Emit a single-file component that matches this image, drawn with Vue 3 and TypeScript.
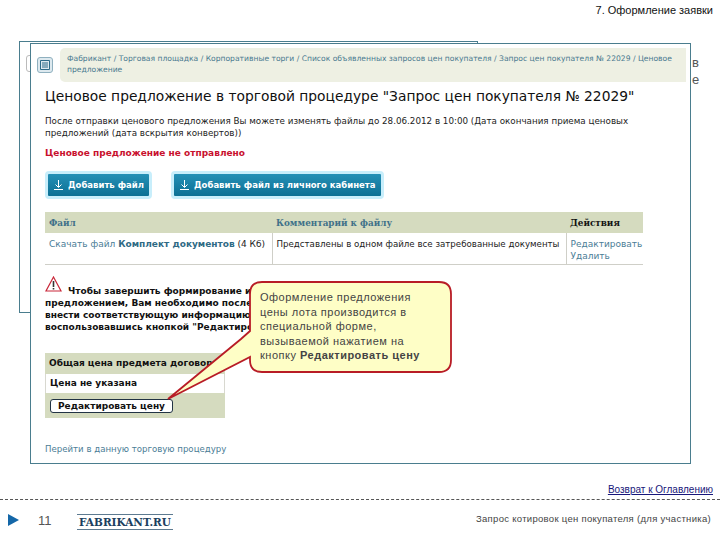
<script setup lang="ts">
interface FileRow {
  name: string
  size: string
  comment: string
}

const crumbs = [
  'Фабрикант',
  'Торговая площадка',
  'Корпоративные торги',
  'Список объявленных запросов цен покупателя',
  'Запрос цен покупателя № 22029',
  'Ценовое предложение'
]

const files: FileRow[] = [
  {
    name: 'Комплект документов',
    size: '(4 Кб)',
    comment: 'Представлены в одном файле все затребованные документы'
  }
]
</script>

<template>
  <div class="page">
    <header class="top">7. Оформление заявки</header>

    <main class="stage">
      <div class="behind-text">в<br />е</div>

      <section class="window back">
        <span class="back-tab"></span>
      </section>

      <section class="window front">
        <div class="crumb-row">
          <span class="menu-icon">
            <svg width="10" height="10" viewBox="0 0 10 10">
              <path d="M.5.5h9v9h-9zM2 3h6M2 5h6M2 7h6" fill="none" stroke="#2d6a88" />
            </svg>
          </span>
          <nav class="crumbs">{{ crumbs.join(' / ') }}</nav>
        </div>

        <div class="content">
          <h1>Ценовое предложение в торговой процедуре "Запрос цен покупателя № 22029"</h1>
          <p class="note">
            После отправки ценового предложения Вы можете изменять файлы до 28.06.2012 в 10:00 (Дата окончания приема ценовых<br />
            предложений (дата вскрытия конвертов))
          </p>
          <p class="status">Ценовое предложение не отправлено</p>

          <div class="actions">
            <button class="add-btn">
              <svg width="9" height="10" viewBox="0 0 9 10"><path d="M4.5 0v7M1.5 4.5l3 3 3-3M0 9.5h9" fill="none" stroke="#fff" /></svg>
              Добавить файл
            </button>
            <button class="add-btn">
              <svg width="9" height="10" viewBox="0 0 9 10"><path d="M4.5 0v7M1.5 4.5l3 3 3-3M0 9.5h9" fill="none" stroke="#fff" /></svg>
              Добавить файл из личного кабинета
            </button>
          </div>

          <table class="files">
            <thead>
              <tr>
                <th class="c1">Файл</th>
                <th class="c2">Комментарий к файлу</th>
                <th class="c3">Действия</th>
              </tr>
            </thead>
            <tbody>
              <tr v-for="file in files" :key="file.name">
                <td><a>Скачать файл <b>{{ file.name }}</b></a> {{ file.size }}</td>
                <td class="comment">{{ file.comment }}</td>
                <td><a>Редактировать</a><br /><a>Удалить</a></td>
              </tr>
            </tbody>
          </table>

          <div class="warning">
            <svg class="warn-icon" width="17" height="16" viewBox="0 0 17 16">
              <path d="M8.5 1L16 15H1z" fill="#fff" stroke="#c9283a" stroke-width="1.2" />
              <path d="M8.5 5v6M8.5 12v1.6" stroke="#333" stroke-width="1.6" />
            </svg>
            <b>Чтобы завершить формирование и подачу заявки<br />
            предложением, Вам необходимо после<br />
            внести соответствующую информацию<br />
            воспользовавшись кнопкой "Редактировать цену"</b>
          </div>

          <div class="price">
            <div class="price-head">Общая цена предмета договора</div>
            <div class="price-value">Цена не указана</div>
            <div class="price-foot"><button class="edit-btn">Редактировать цену</button></div>
          </div>

          <a class="go-link">Перейти в данную торговую процедуру</a>
        </div>
      </section>

      <aside class="callout">
        <svg class="callout-shape" width="202" height="91" viewBox="0 0 202 91">
          <path
            d="M13 1H190Q202 1 202 13V79Q202 91 190 91H13Q1 91 1 79V76L-81 118L-8 58L1 50V13Q1 1 13 1Z"
            fill="#fefec6"
            stroke="#b81c26"
            stroke-width="1.8"
          />
        </svg>
        <p>Оформление предложения цены лота производится в специальной форме, вызываемой нажатием на кнопку <b>Редактировать цену</b></p>
      </aside>
    </main>

    <div class="return"><a>Возврат к Оглавлению</a></div>

    <footer class="bottom">
      <span class="play"></span>
      <span class="num">11</span>
      <span class="logo">FABRIKANT.RU</span>
      <span class="doc">Запрос котировок цен покупателя (для участника)</span>
    </footer>
  </div>
</template>

<style>
html,
body {
  margin: 0;
  background: #fff;
}
</style>

<style scoped>
.page {
  width: 720px;
  height: 540px;
  overflow: hidden;
  display: flex;
  flex-direction: column;
  font-family: "Liberation Sans", Arial, sans-serif;
}

.top {
  height: 41px;
  box-sizing: border-box;
  padding: 3px 7px 0 0;
  text-align: right;
  font-size: 11px;
  line-height: 14px;
  color: #111;
}

.stage {
  position: relative;
  height: 440px;
}

.behind-text {
  position: absolute;
  left: 692px;
  top: 13px;
  font-size: 13px;
  line-height: 17px;
  color: #555;
}

.window {
  position: absolute;
  box-sizing: border-box;
  background: #fff;
  border: 1px solid #4a7d8e;
}

.back {
  left: 19px;
  top: 0;
  width: 459px;
  height: 272px;
}

.back-tab {
  display: block;
  width: 12px;
  height: 15px;
  margin: 13px 0 0 6px;
  border: 1px solid #bbb;
  border-radius: 3px 0 0 3px;
}

.front {
  left: 30px;
  top: 2px;
  width: 661px;
  height: 421px;
  padding: 4px 4px 0 6px;
}

.crumb-row {
  display: flex;
  align-items: center;
  gap: 7px;
}

.menu-icon {
  width: 16px;
  height: 16px;
  flex: none;
  display: flex;
  align-items: center;
  justify-content: center;
  box-sizing: border-box;
  background: #dde9ef;
  border: 1px solid #8fb0bf;
  border-radius: 3px;
}

.crumbs {
  flex: 1;
  box-sizing: border-box;
  height: 34px;
  padding: 6px 8px 0 7px;
  background: #eef0e3;
  border-radius: 5px 0 0 5px;
  font: 7.6px/10.5px "DejaVu Sans", sans-serif;
  color: #4a7a90;
}

.content {
  padding: 0 0 0 8px;
  font-family: "DejaVu Sans", sans-serif;
}

h1 {
  margin: 4px 0 0;
  font-size: 13.8px;
  font-weight: 400;
  line-height: 20px;
  color: #111;
  white-space: nowrap;
}

.note {
  margin: 9px 0 0;
  font-size: 8.76px;
  line-height: 12px;
  color: #222;
  white-space: nowrap;
}

.status {
  margin: 8px 0 0;
  font-size: 9px;
  font-weight: 700;
  line-height: 12px;
  color: #c8102e;
}

.actions {
  display: flex;
  gap: 19px;
  margin-top: 12px;
}

.add-btn {
  height: 28px;
  padding: 0 5px 0 6px;
  display: flex;
  align-items: center;
  gap: 5px;
  background: linear-gradient(#2590b6, #0c7094);
  border: 3px solid #c8eefb;
  border-radius: 4px;
  color: #fff;
  font: 700 8.5px "DejaVu Sans", sans-serif;
}

.files {
  width: 598px;
  margin-top: 13px;
  table-layout: fixed;
  border-collapse: collapse;
  font-size: 9px;
  color: #222;
}

.files th {
  height: 21px;
  padding: 0 4px;
  box-sizing: border-box;
  text-align: left;
  background: #d5dbbf;
  color: #3f7189;
  font-family: "DejaVu Serif", serif;
  font-size: 8.8px;
}

.files th.c1 {
  width: 227px;
}

.files th.c2 {
  width: 294px;
}

.files th.c3 {
  color: #111;
}

.files td {
  height: 31px;
  padding: 5px 4px 0;
  box-sizing: border-box;
  vertical-align: top;
  line-height: 12px;
  white-space: nowrap;
  overflow: hidden;
  border-bottom: 1px solid #cfcfc8;
  border-right: 1px solid #cfcfc8;
}

.files td.comment {
  font-size: 8.66px;
}

.files td:last-child {
  border-right: 0;
}

.files a,
.go-link {
  color: #4a7d96;
}

.files b {
  color: #2f6a85;
}

.warning {
  position: relative;
  box-sizing: border-box;
  height: 67px;
  margin-top: 11px;
  padding-top: 9px;
  font-size: 9px;
  line-height: 12.2px;
  color: #111;
  white-space: nowrap;
}

.warning b {
  display: block;
  text-indent: 23px;
}

.warn-icon {
  position: absolute;
  left: 0;
  top: 0;
}

.price {
  width: 180px;
  margin-top: 10px;
  background: #d5dbbf;
  font-size: 9px;
  color: #111;
  font-weight: 700;
  white-space: nowrap;
}

.price-head {
  height: 21px;
  padding: 0 4px;
  line-height: 21px;
  overflow: hidden;
}

.price-value {
  height: 19px;
  box-sizing: border-box;
  padding: 0 4px;
  line-height: 19px;
  background: #fff;
  border: 1px solid #d8d8d0;
  border-width: 0 1px;
  font-weight: 700;
}

.price-foot {
  height: 25px;
  padding: 6px 5px 0;
  box-sizing: border-box;
}

.edit-btn {
  display: block;
  width: 123px;
  height: 14px;
  padding: 0;
  background: #fff;
  border: 1px solid #234;
  border-radius: 3px;
  font: 700 9px/12px "DejaVu Sans", sans-serif;
  color: #111;
}

.go-link {
  display: block;
  margin-top: 25px;
  font-size: 8.6px;
  line-height: 12px;
}

.callout {
  position: absolute;
  left: 249px;
  top: 240px;
  width: 202px;
  height: 91px;
}

.callout-shape {
  position: absolute;
  left: 0;
  top: 0;
  overflow: visible;
}

.callout p {
  position: relative;
  margin: 0;
  padding: 9px 12px 0 11px;
  font-size: 11px;
  line-height: 14.6px;
  letter-spacing: 0.5px;
  color: #444;
}

.return {
  height: 19px;
  padding: 0 7px 0 0;
  text-align: right;
  font-size: 10px;
  line-height: 18px;
  border-bottom: 1px dashed #555;
  box-sizing: border-box;
}

.return a {
  color: #17177a;
  text-decoration: underline;
}

.bottom {
  flex: 1;
  display: flex;
  align-items: center;
  padding: 0 9px 0 8px;
  color: #444;
}

.play {
  width: 0;
  height: 0;
  border-left: 11px solid #1467a8;
  border-top: 6.5px solid transparent;
  border-bottom: 6.5px solid transparent;
}

.num {
  margin-left: 19px;
  width: 39px;
  font-size: 13px;
  color: #555;
}

.logo {
  width: 96px;
  margin-top: 4px;
  box-sizing: border-box;
  text-align: center;
  border-top: 1px solid #5d7a90;
  border-bottom: 1px solid #5d7a90;
  font: 700 10.5px/14px "DejaVu Serif", serif;
  color: #1d3f60;
}

.doc {
  margin-left: auto;
  margin-bottom: 4px;
  font-size: 9.5px;
  letter-spacing: 0.3px;
}
</style>
